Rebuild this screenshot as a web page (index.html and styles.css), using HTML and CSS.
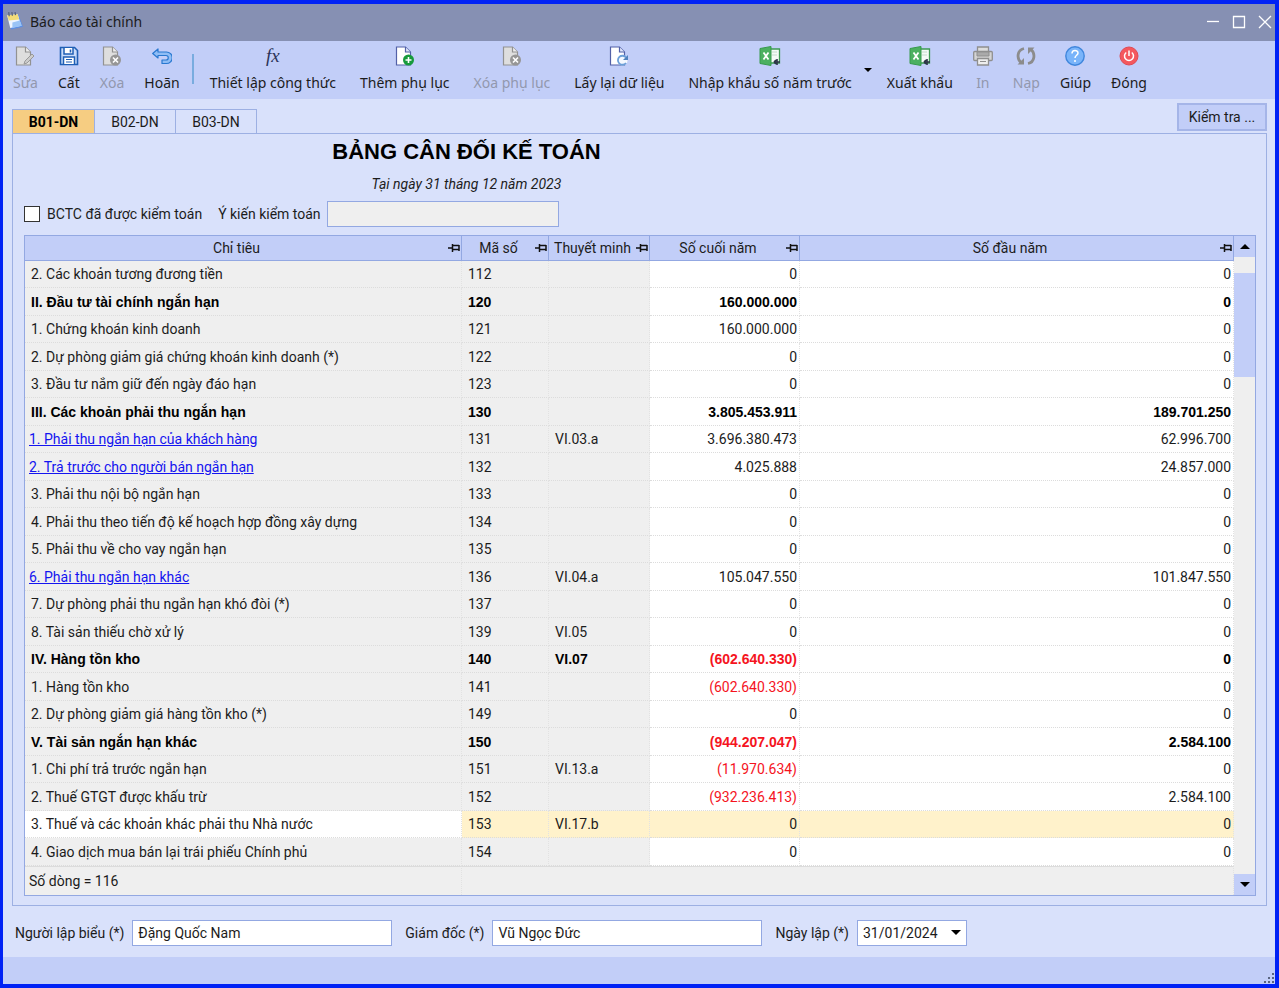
FILE: index.html
```html
<!DOCTYPE html>
<html lang="vi">
<head>
<meta charset="utf-8">
<title>Báo cáo tài chính</title>
<link rel="stylesheet" href="styles.css">
</head>
<body>
<svg class="defs" aria-hidden="true">
  <symbol id="pin" viewBox="0 0 12 10"><path d="M0 5h5M4.500 1v8M5 2.500h6M5 6.500h6M11 2v6" fill="none" stroke="#111" stroke-width="1.500"/></symbol>
  <symbol id="page" viewBox="0 0 20 20"><path d="M1.500 1h9l5 5v13h-14z" fill="var(--paper)" stroke="var(--line)" stroke-width="1.200"/><path d="M10.500 1v5h5" fill="var(--fold)" stroke="var(--line)" stroke-width="1.200"/></symbol>
  <symbol id="excel" viewBox="0 0 22 20"><path d="M11 3h9.500v14H11z" fill="#f6fbf7" stroke="#3d9a52" stroke-width="1.300"/><path d="M13 6h5M13 9h5" stroke="#c5dccb"/><path d="M1 2.500 12 .500v19L1 17.500z" fill="#4cb061" stroke="#379a4d"/><path d="m4.500 6.500 5 7m0-7-5 7" stroke="#fff" stroke-width="1.800"/><path d="M15 16h6M18 13v6M15 16l2-2m-2 2 2 2" stroke="#2c3548" stroke-width="1.600" fill="none"/></symbol>
</svg>
<header class="titlebar">
  <svg class="app-icon" viewBox="0 0 16 18"><path d="m2 5 10-1 4 11-11 2.500z" fill="#5b8fe6"/><path d="m1 4 10-1 3.500 11-10.500 2z" fill="#eef5ff"/><path d="m1 4 10-1 1.500 5-10 1z" fill="#f2dc78"/><path d="M3 5 2.500 1M6 4.500 5.500 1M9 4 8.500 1" stroke="#56627c" stroke-width="1.200"/><path d="m6 11 7-2 2 5-9 2z" fill="#9ac4f6"/></svg>
  <h1 class="caption">Báo cáo tài chính</h1>
  <div class="win-btns">
    <button class="win-btn" aria-label="Thu nhỏ"><svg viewBox="0 0 14 14"><path d="M1 6.500h12"/></svg></button>
    <button class="win-btn" aria-label="Phóng to"><svg viewBox="0 0 14 14"><path d="M1.500 1.500h11v11h-11z"/></svg></button>
    <button class="win-btn" aria-label="Đóng cửa sổ"><svg viewBox="0 0 14 14"><path d="m1 1 12 12M13 1 1 13"/></svg></button>
  </div>
</header>
<nav class="toolbar">
  <button class="tool" disabled><svg class="pg off" viewBox="0 0 20 20"><use href="#page"/><path d="m9 18 1-3 7-7 2 2-7 7z" fill="#ccc" stroke="#999"/></svg>Sửa</button>
  <button class="tool"><svg viewBox="0 0 20 20"><path d="M1.500 1.500h14l3 3v14h-17z" fill="#c9dcfa" stroke="#1f5fb5" stroke-width="1.600"/><path d="M5 2v6h9V2" fill="#fff" stroke="#1f5fb5" stroke-width="1.500"/><path d="M11.500 3.500v3" stroke="#1f5fb5" stroke-width="1.600"/><path d="M4.500 18v-7h11v7" fill="#fff" stroke="#1f5fb5" stroke-width="1.500"/><path d="M7 13.500h6M7 16h6" stroke="#1f5fb5"/></svg>Cất</button>
  <button class="tool" disabled><svg class="pg off" viewBox="0 0 20 20"><use href="#page"/><circle cx="13.500" cy="14" r="5.500" fill="#969696"/><path d="m11 11.500 5 5m0-5-5 5" stroke="#fff" stroke-width="1.600"/></svg>Xóa</button>
  <button class="tool"><svg viewBox="0 0 20 20"><path d="M.700 7.500 6 3v3h8.500a4.800 4.800 0 0 1 0 11.500H10V14h4a2 2 0 0 0 0-4.500H6V12z" fill="#8fbdf5" stroke="#2878d0" stroke-width="1.200" stroke-linejoin="round"/></svg>Hoãn</button>
  <span class="split"></span>
  <button class="tool wide"><span class="fx" aria-hidden="true">fx</span>Thiết lập công thức</button>
  <button class="tool wide"><svg class="pg" viewBox="0 0 20 20"><use href="#page"/><circle cx="13.500" cy="14" r="5.500" fill="#169a3c"/><path d="M13.500 11v6m-3-3h6" stroke="#fff" stroke-width="1.600"/></svg>Thêm phụ lục</button>
  <button class="tool wide" disabled><svg class="pg off" viewBox="0 0 20 20"><use href="#page"/><circle cx="13.500" cy="14" r="5.500" fill="#969696"/><path d="m11 11.500 5 5m0-5-5 5" stroke="#fff" stroke-width="1.600"/></svg>Xóa phụ lục</button>
  <button class="tool wide"><svg class="pg" viewBox="0 0 20 20"><use href="#page"/><circle cx="13.500" cy="14.500" r="5" fill="#f4f8ff"/><path d="M17 17a4.500 4.500 0 1 1 0-5.500" fill="none" stroke="#6b9fd8" stroke-width="1.800"/><path d="M19 9v5h-5z" fill="#4f82bd"/></svg>Lấy lại dữ liệu</button>
  <button class="tool wide"><svg class="xl" viewBox="0 0 22 20"><use href="#excel"/></svg>Nhập khẩu số năm trước</button>
  <button class="drop" aria-label="Tùy chọn nhập khẩu"></button>
  <button class="tool"><svg class="xl" viewBox="0 0 22 20"><use href="#excel"/></svg>Xuất khẩu</button>
  <button class="tool" disabled><svg viewBox="0 0 20 20"><path d="M4.500 6V1h11v5" fill="#ddd" stroke="#8f8f8f" stroke-width="1.300"/><rect x=".7" y="5.500" width="18.600" height="9" rx="1" fill="#d4d4d4" stroke="#8f8f8f" stroke-width="1.300"/><path d="M4 6h12v4H4z" fill="#aaa" stroke="#8f8f8f"/><path d="M4.500 12.500h11V19h-11z" fill="#eee" stroke="#8f8f8f" stroke-width="1.300"/><path d="M7 15.500h6" stroke="#8f8f8f"/></svg>In</button>
  <button class="tool" disabled><svg viewBox="0 0 20 20"><path d="M8 2.500C1 4 .5 12.500 5 16.500M12 17.500c7-1.500 7.500-10 3-14" fill="none" stroke="#8c8c8c" stroke-width="2.800"/><path d="M1.500 18.500h6.500V12zM18.500 1.500H12V8z" fill="#8c8c8c"/></svg>Nạp</button>
  <button class="tool"><svg viewBox="0 0 20 20"><circle cx="10" cy="10" r="9.200" fill="#79b4fa" stroke="#3f86dc" stroke-width="1.400"/><path d="M7 7.500c0-4 6-3.800 6-.500 0 2.200-3 2.300-3 5" fill="none" stroke="#fff" stroke-width="1.500"/><circle cx="10" cy="15" r="1" fill="#fff"/></svg>Giúp</button>
  <button class="tool"><svg viewBox="0 0 20 20"><circle cx="10" cy="10" r="9" fill="#f4585e" stroke="#df4a55"/><path d="M7.200 6.500a4.500 4.500 0 1 0 5.600 0M10 4.500V10" fill="none" stroke="#fff" stroke-width="1.500"/></svg>Đóng</button>
</nav>
<main class="content">
  <div class="tab-row">
    <div class="tabs" role="tablist">
      <button class="tab active" role="tab" aria-selected="true">B01-DN</button>
      <button class="tab" role="tab">B02-DN</button>
      <button class="tab" role="tab">B03-DN</button>
    </div>
    <button class="check">Kiểm tra ...</button>
  </div>
  <section class="panel">
    <div class="heading">
      <h2 class="report-title">BẢNG CÂN ĐỐI KẾ TOÁN</h2>
      <p class="report-date">Tại ngày 31 tháng 12 năm 2023</p>
    </div>
    <div class="audit">
      <input type="checkbox" class="tick" id="audited"><label for="audited">BCTC đã được kiểm toán</label>
      <label class="opinion-label" for="opinion">Ý kiến kiểm toán</label><input class="field opinion" id="opinion" type="text" disabled>
    </div>
    <div class="grid">
      <table class="sheet">
        <colgroup><col class="c-name"><col class="c-code"><col class="c-note"><col class="c-end"><col></colgroup>
        <thead><tr>
          <th><div class="head"><span>Chỉ tiêu</span><svg><use href="#pin"/></svg></div></th>
          <th><div class="head"><span>Mã số</span><svg><use href="#pin"/></svg></div></th>
          <th><div class="head"><span>Thuyết minh</span><svg><use href="#pin"/></svg></div></th>
          <th><div class="head"><span>Số cuối năm</span><svg><use href="#pin"/></svg></div></th>
          <th><div class="head"><span>Số đầu năm</span><svg><use href="#pin"/></svg></div></th>
        </tr></thead>
        <tbody>
          <tr><td>2. Các khoản tương đương tiền</td><td>112</td><td></td><td>0</td><td>0</td></tr>
          <tr class="group"><td>II. Đầu tư tài chính ngắn hạn</td><td>120</td><td></td><td>160.000.000</td><td>0</td></tr>
          <tr><td>1. Chứng khoán kinh doanh</td><td>121</td><td></td><td>160.000.000</td><td>0</td></tr>
          <tr><td>2. Dự phòng giảm giá chứng khoán kinh doanh (*)</td><td>122</td><td></td><td>0</td><td>0</td></tr>
          <tr><td>3. Đầu tư nắm giữ đến ngày đáo hạn</td><td>123</td><td></td><td>0</td><td>0</td></tr>
          <tr class="group"><td>III. Các khoản phải thu ngắn hạn</td><td>130</td><td></td><td>3.805.453.911</td><td>189.701.250</td></tr>
          <tr><td class="linked"><a href="#131">1. Phải thu ngắn hạn của khách hàng</a></td><td>131</td><td>VI.03.a</td><td>3.696.380.473</td><td>62.996.700</td></tr>
          <tr><td class="linked"><a href="#132">2. Trả trước cho người bán ngắn hạn</a></td><td>132</td><td></td><td>4.025.888</td><td>24.857.000</td></tr>
          <tr><td>3. Phải thu nội bộ ngắn hạn</td><td>133</td><td></td><td>0</td><td>0</td></tr>
          <tr><td>4. Phải thu theo tiến độ kế hoạch hợp đồng xây dựng</td><td>134</td><td></td><td>0</td><td>0</td></tr>
          <tr><td>5. Phải thu về cho vay ngắn hạn</td><td>135</td><td></td><td>0</td><td>0</td></tr>
          <tr><td class="linked"><a href="#136">6. Phải thu ngắn hạn khác</a></td><td>136</td><td>VI.04.a</td><td>105.047.550</td><td>101.847.550</td></tr>
          <tr><td>7. Dự phòng phải thu ngắn hạn khó đòi (*)</td><td>137</td><td></td><td>0</td><td>0</td></tr>
          <tr><td>8. Tài sản thiếu chờ xử lý</td><td>139</td><td>VI.05</td><td>0</td><td>0</td></tr>
          <tr class="group"><td>IV. Hàng tồn kho</td><td>140</td><td>VI.07</td><td class="neg">(602.640.330)</td><td>0</td></tr>
          <tr><td>1. Hàng tồn kho</td><td>141</td><td></td><td class="neg">(602.640.330)</td><td>0</td></tr>
          <tr><td>2. Dự phòng giảm giá hàng tồn kho (*)</td><td>149</td><td></td><td>0</td><td>0</td></tr>
          <tr class="group"><td>V. Tài sản ngắn hạn khác</td><td>150</td><td></td><td class="neg">(944.207.047)</td><td>2.584.100</td></tr>
          <tr><td>1. Chi phí trả trước ngắn hạn</td><td>151</td><td>VI.13.a</td><td class="neg">(11.970.634)</td><td>0</td></tr>
          <tr><td>2. Thuế GTGT được khấu trừ</td><td>152</td><td></td><td class="neg">(932.236.413)</td><td>2.584.100</td></tr>
          <tr class="current"><td>3. Thuế và các khoản khác phải thu Nhà nước</td><td>153</td><td>VI.17.b</td><td>0</td><td>0</td></tr>
          <tr><td>4. Giao dịch mua bán lại trái phiếu Chính phủ</td><td>154</td><td></td><td>0</td><td>0</td></tr>
        </tbody>
        <tfoot><tr><td>Số dòng = 116</td><td colspan="4"></td></tr></tfoot>
      </table>
      <div class="scroll">
        <button class="scroll-btn up" aria-label="Cuộn lên"></button>
        <div class="track"><div class="thumb"></div></div>
        <button class="scroll-btn down" aria-label="Cuộn xuống"></button>
      </div>
    </div>
  </section>
  <form class="sign">
    <label for="maker">Người lập biểu (*)</label><input class="field maker" id="maker" type="text" value="Đặng Quốc Nam">
    <label for="director">Giám đốc (*)</label><input class="field director" id="director" type="text" value="Vũ Ngọc Đức">
    <label for="date">Ngày lập (*)</label><span class="picker"><select class="field date" id="date"><option>31/01/2024</option></select></span>
  </form>
</main>
<footer class="status"><svg viewBox="0 0 12 12"><path d="M9 1h2v2H9zM5 5h2v2H5zM9 5h2v2H9zM1 9h2v2H1zM5 9h2v2H5zM9 9h2v2H9z" fill="#5a6580"/></svg></footer>
</body>
</html>
```
FILE: styles.css
```css
* { box-sizing: border-box; }
body {
  margin: 0;
  min-height: 100vh;
  display: flex;
  flex-direction: column;
  border: 4px solid #0022f5;
  border-left-width: 3px;
  background: #d9e1fb;
  color: #1c1c1c;
  font: 14px/20px Roboto, "Liberation Sans", Arial, sans-serif;
}
button, input, select { font: inherit; color: inherit; }
button { border: 0; padding: 0; background: none; }
.defs { position: absolute; width: 0; height: 0; }

.titlebar {
  display: flex;
  align-items: center;
  height: 37px;
  padding: 0 0 2px 3px;
  background: #8690b3;
}
.app-icon { width: 17px; height: 19px; margin: 0 7px 2px 0; }
.caption { flex: 1; margin: 0; font: 14px/20px "Noto Sans", "Open Sans", sans-serif; }
.win-btns { display: flex; gap: 6px; }
.win-btn { width: 20px; height: 20px; }
.win-btn svg { display: block; width: 14px; height: 14px; margin: 0 auto; fill: none; stroke: #fff; stroke-width: 1.300; }

.toolbar { display: flex; align-items: stretch; height: 58px; background: #c2cef8; }
.tool {
  display: flex;
  flex-direction: column;
  align-items: center;
  gap: 7px;
  padding: 5px 10px 0;
  white-space: nowrap;
  font: 14px/20px "Noto Sans", "Open Sans", sans-serif;
}
.tool.wide { padding: 5px 12px 0; }
.tool:disabled { color: #9298ae; }
.tool svg { width: 20px; height: 20px; }
.tool svg.xl { width: 22px; }
.pg { --paper: #fff; --line: #5361a8; --fold: #dfe6fb; }
.pg.off { --paper: #dedede; --line: #929292; --fold: #eee; }
.fx { height: 20px; font: italic 19px/20px "Liberation Serif", serif; color: #2c3458; }
.split { width: 2px; height: 30px; margin: 13px 4px 0 2px; background: #79acdf; }
.drop { width: 8px; height: 58px; margin: 0 5px 0 0; }
.drop::after, .scroll-btn::after {
  content: "";
  display: block;
  margin: auto;
  width: 0;
  border: 4px solid transparent;
  border-top-color: #000;
  border-bottom: 0;
}

.content { flex: 1; display: flex; flex-direction: column; padding: 4px 8px 0 9px; }
.tab-row { display: flex; justify-content: space-between; align-items: flex-start; height: 30px; }
.tabs { display: flex; align-self: flex-end; }
.tab {
  width: 82px;
  height: 24px;
  margin-right: -1px;
  border: 1px solid #9db0e3;
  border-bottom: 0;
}
.tab.active { width: 83px; background: #f6cd82; font-weight: 700; color: #000; }
.check { width: 90px; height: 28px; border: 2px solid #a5b5e8; background: #c2cef8; }
.panel {
  flex: 1;
  display: flex;
  flex-direction: column;
  padding: 0 10px 9px 11px;
  border: 1px solid #9db0e3;
}
.heading { width: 885px; text-align: center; }
.report-title { margin: 4px 0 0; font: 700 22px/28px "Liberation Sans", Arial, sans-serif; color: #000; }
.report-date { margin: 8px 0 7px; font-style: italic; }
.audit { display: flex; align-items: center; height: 26px; margin-bottom: 8px; }
.tick {
  appearance: none;
  width: 16px;
  height: 16px;
  margin: 0 7px 0 0;
  border: 1px solid #333;
  background: #fff;
}
.opinion-label { margin: 0 6px 0 16px; }
.field { height: 26px; padding: 0 5px; border: 1px solid #93a8e2; border-radius: 0; background: #fff; }
.opinion { width: 232px; background: #efefef; }

.grid { flex: 1; display: flex; border: 1px solid #93a8e2; background: #efefef; }
.sheet { flex: 1; min-width: 0; table-layout: fixed; border-collapse: separate; border-spacing: 0; }
.c-name { width: 437px; }
.c-code { width: 87px; }
.c-note { width: 101px; }
.c-end { width: 150px; }
.sheet th {
  height: 25px;
  padding: 0;
  border-right: 1px solid #93a8e2;
  border-bottom: 1px solid #93a8e2;
  background: #c2cef8;
  font-weight: 400;
}
.head { display: flex; align-items: center; padding-right: 1px; }
.head span { flex: 1; white-space: nowrap; }
.head svg { width: 12px; height: 10px; }
.sheet td {
  padding: 0 6px;
  border-right: 1px dotted #e2e2e2;
  border-bottom: 1px dotted #dcdcdc;
  white-space: nowrap;
}
.sheet tbody tr { height: 27px; }
.sheet tbody tr:nth-child(even) { height: 28px; }
.sheet tbody td:nth-child(n+4) { padding-right: 2px; text-align: right; background: #fff; }
.group td { font-family: "Liberation Sans", Arial, sans-serif; font-weight: 700; color: #000; }
.sheet .linked { padding-left: 4px; }
.linked a { color: #1414f0; }
.sheet .neg { color: #f5141e; }
.sheet tbody .current td:nth-child(n+2) { background: #fff2cb; }
.sheet .current td:first-child { background: #fff; }
.sheet tfoot td { height: 29px; padding-left: 4px; border-top: 1px solid #dcdcdc; border-bottom: 0; }
.scroll { display: flex; flex-direction: column; width: 21px; }
.scroll-btn { height: 21px; background: #c2cef8; }
.scroll-btn::after { border-width: 5px 5px 0; }
.up::after { transform: rotate(180deg); }
.track { flex: 1; padding-top: 16px; }
.thumb { height: 104px; background: #c2cef8; }

.sign { display: flex; align-items: center; height: 51px; padding: 2px 0 0 3px; }
.sign .field { margin: 0 13px 0 8px; }
.sign .maker { width: 260px; }
.sign .director { width: 270px; }
.picker { position: relative; }
.picker::after {
  content: "";
  position: absolute;
  top: 50%;
  right: 19px;
  margin-top: -3px;
  border: 5px solid transparent;
  border-top-color: #000;
  border-bottom: 0;
}
.sign .date { appearance: none; width: 110px; }
.status { display: flex; justify-content: flex-end; align-items: flex-end; height: 27px; background: #c2cef8; }
.status svg { width: 12px; height: 12px; }
```
